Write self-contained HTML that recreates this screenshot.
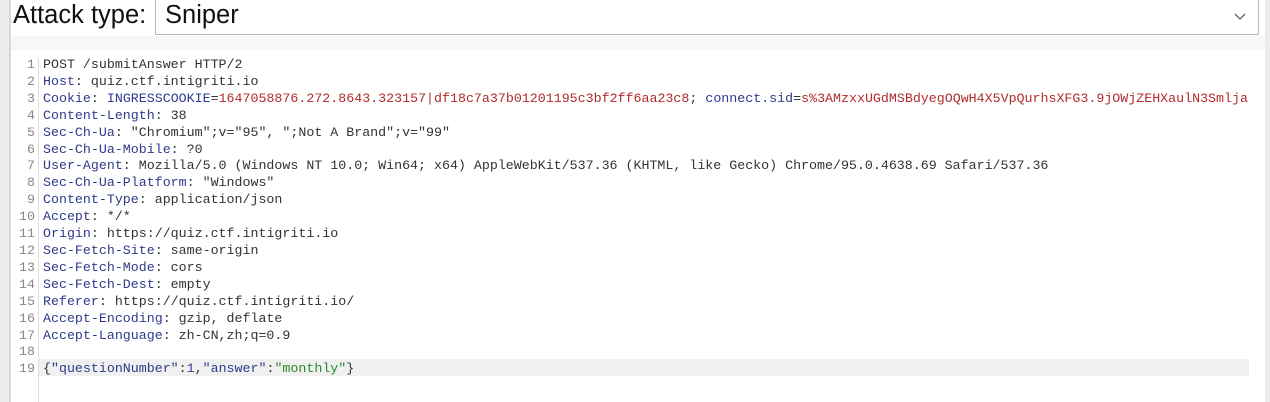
<!DOCTYPE html>
<html><head><style>
body{margin:0;width:1270px;height:402px;background:#fff;position:relative;overflow:hidden;font-family:"Liberation Sans",sans-serif}
.lb{position:absolute;left:0;top:0;width:10px;height:402px;background:#ececec}
.lb2{position:absolute;left:9px;top:0;width:2px;height:402px;background:#d8d8d8}
.rb{position:absolute;left:1265px;top:0;width:5px;height:402px;background:#ececec}
.top{position:absolute;left:11px;top:36px;width:1254px;height:14px;background:#f7f6f8}
.lab{position:absolute;left:13px;top:1px;font-size:25.5px;color:#111}
.dd{position:absolute;left:155px;top:0;width:1104px;height:35px;border:1px solid #b8b8b8;border-top:none;background:#fff;box-sizing:border-box}
.dd span{position:absolute;left:9px;top:1px;font-size:25.5px;color:#111}
.chev{position:absolute;right:12px;top:13px}
.gut{position:absolute;left:38px;top:58px;width:1px;height:344px;background:#ddd}
.hl{position:absolute;left:39px;top:359px;width:1210px;height:17px;background:#f0f0f0}
.code{position:absolute;left:0;top:57px;font-family:"Liberation Mono",monospace;font-size:13.3px;line-height:16.9px;white-space:pre;color:#333}
.n{display:inline-block;width:35px;text-align:right;color:#888;padding-right:8px}
.k{color:#2f3a8c}.r{color:#b22b2b}.g{color:#2a8a2a}
</style></head><body>
<div class="lb"></div><div class="lb2"></div><div class="rb"></div><div class="top"></div>
<div class="lab">Attack type:</div>
<div class="dd"><span>Sniper</span><svg class="chev" width="12" height="8"><path d="M1 1L6 6L11 1" stroke="#666" fill="none" stroke-width="1.3"/></svg></div>
<div class="gut"></div><div class="hl"></div>
<div class="code"><span class="n">1</span>POST /submitAnswer HTTP/2
<span class="n">2</span><span class="k">Host</span>: quiz.ctf.intigriti.io
<span class="n">3</span><span class="k">Cookie</span>: <span class="k">INGRESSCOOKIE</span>=<span class="r">1647058876.272.8643.323157|df18c7a37b01201195c3bf2ff6aa23c8</span>; <span class="k">connect.sid</span>=<span class="r">s%3AMzxxUGdMSBdyegOQwH4X5VpQurhsXFG3.9jOWjZEHXaulN3Smlja</span>
<span class="n">4</span><span class="k">Content-Length</span>: 38
<span class="n">5</span><span class="k">Sec-Ch-Ua</span>: "Chromium";v="95", ";Not A Brand";v="99"
<span class="n">6</span><span class="k">Sec-Ch-Ua-Mobile</span>: ?0
<span class="n">7</span><span class="k">User-Agent</span>: Mozilla/5.0 (Windows NT 10.0; Win64; x64) AppleWebKit/537.36 (KHTML, like Gecko) Chrome/95.0.4638.69 Safari/537.36
<span class="n">8</span><span class="k">Sec-Ch-Ua-Platform</span>: "Windows"
<span class="n">9</span><span class="k">Content-Type</span>: application/json
<span class="n">10</span><span class="k">Accept</span>: */*
<span class="n">11</span><span class="k">Origin</span>: https://quiz.ctf.intigriti.io
<span class="n">12</span><span class="k">Sec-Fetch-Site</span>: same-origin
<span class="n">13</span><span class="k">Sec-Fetch-Mode</span>: cors
<span class="n">14</span><span class="k">Sec-Fetch-Dest</span>: empty
<span class="n">15</span><span class="k">Referer</span>: https://quiz.ctf.intigriti.io/
<span class="n">16</span><span class="k">Accept-Encoding</span>: gzip, deflate
<span class="n">17</span><span class="k">Accept-Language</span>: zh-CN,zh;q=0.9
<span class="n">18</span>
<span class="n">19</span>{<span class="k">"questionNumber"</span>:<span class="k">1</span>,<span class="k">"answer"</span>:<span class="g">"monthly"</span>}</div>
</body></html>
